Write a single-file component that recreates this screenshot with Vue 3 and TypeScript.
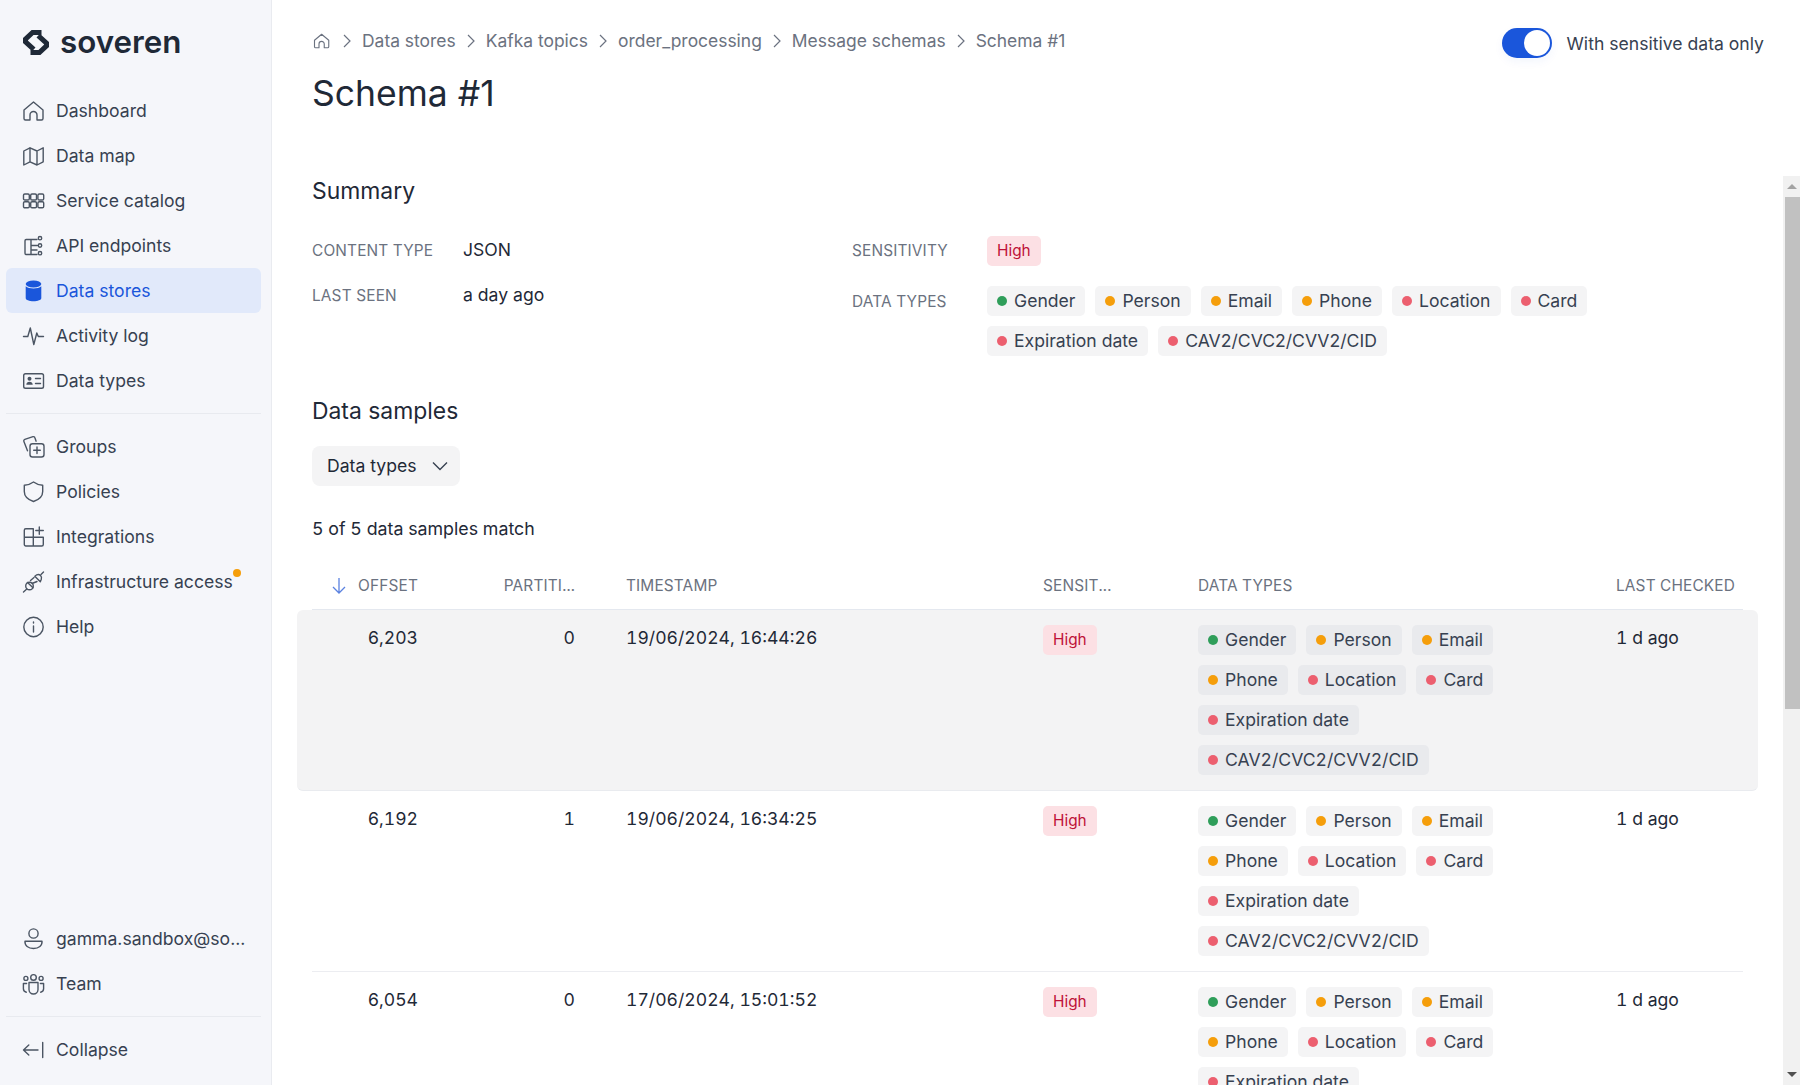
<template>
  <div class="app">
    <aside class="sidebar">
      <div class="brand">
        <svg class="logo" viewBox="0 0 26 25" fill="none" stroke="#1f2937" stroke-width="5" stroke-linejoin="miter">
          <path d="M18.500 2.500H9.600L2.500 9.200v2.600L10.800 19.400" />
          <path d="M7.500 22.500h8.900l7.100-6.700v-2.600L15.200 5.600" />
        </svg>
        <span class="wordmark">soveren</span>
      </div>

      <nav class="nav">
        <a class="nav-item">
          <svg class="icon" viewBox="0 0 24 24"><path d="M2 11 11.500 3 21 11v8.500a1.500 1.500 0 0 1-1.500 1.500H15v-5a3.500 3.500 0 0 0-7 0v5H3.500A1.500 1.500 0 0 1 2 19.500z" /></svg>
          <span>Dashboard</span>
        </a>
        <a class="nav-item">
          <svg class="icon" viewBox="0 0 24 24"><path d="M1.800 7 8 3.800l7 3.200 6.200-3.200v14L15 21l-7-3.200L1.800 21zM8 3.800v14M15 7v14" /></svg>
          <span>Data map</span>
        </a>
        <a class="nav-item">
          <svg class="icon" viewBox="0 0 24 24">
            <rect x="1.500" y="5" width="5.800" height="6" rx="1.300" /><rect x="8.700" y="5" width="5.800" height="6" rx="1.300" /><rect x="15.900" y="5" width="5.800" height="6" rx="1.300" />
            <rect x="1.500" y="12.800" width="5.800" height="6" rx="1.300" /><rect x="8.700" y="12.800" width="5.800" height="6" rx="1.300" /><rect x="15.900" y="12.800" width="5.800" height="6" rx="1.300" />
          </svg>
          <span>Service catalog</span>
        </a>
        <a class="nav-item">
          <svg class="icon" viewBox="0 0 24 24">
            <path d="M15 5.500H4.200A1.200 1.200 0 0 0 3 6.700v12.600a1.200 1.200 0 0 0 1.200 1.200H15M9 5.500v15M9 11.500h6.500M9 16h6" />
            <circle cx="18" cy="4.200" r="1.700" /><circle cx="18" cy="11.500" r="1.700" /><circle cx="18" cy="19.200" r="1.700" />
          </svg>
          <span>API endpoints</span>
        </a>
        <a class="nav-item active">
          <svg class="icon" viewBox="0 0 24 24">
            <ellipse class="solid" cx="11.500" cy="5" rx="7.800" ry="3.500" />
            <path class="solid" d="M3.700 7.300C5.200 9 8.500 9.500 11.500 9.500s6.300-.5 7.800-2.200v12c0 1.600-3.500 3-7.800 3s-7.800-1.400-7.800-3z" />
          </svg>
          <span>Data stores</span>
        </a>
        <a class="nav-item">
          <svg class="icon" viewBox="0 0 24 24"><path d="M1.500 12.500h4.300L8.300 4l3.500 16.500 3-11.500 1.500 3.500h5.200" /></svg>
          <span>Activity log</span>
        </a>
        <a class="nav-item">
          <svg class="icon" viewBox="0 0 24 24">
            <rect x="1.700" y="4.800" width="19.800" height="14.500" rx="1.800" />
            <circle class="solid" cx="7.500" cy="9.800" r="2" /><path class="solid" d="M4.300 15.800c0-2 1.400-3 3.200-3s3.200 1 3.200 3z" />
            <path d="M13.500 9.500h5M13.500 14.500h5" />
          </svg>
          <span>Data types</span>
        </a>
      </nav>
      <div class="divider" />
      <nav class="nav">
        <a class="nav-item">
          <svg class="icon" viewBox="0 0 24 24">
            <rect x="8" y="8.800" width="14" height="13.200" rx="2.500" />
            <path d="M15 12v6.500M11.700 15.300h6.600M5.500 15.800 1.900 6.400a1.500 1.500 0 0 1 .9-2l8.200-2.700a1.500 1.500 0 0 1 1.900 1l1.200 3.500" />
          </svg>
          <span>Groups</span>
        </a>
        <a class="nav-item">
          <svg class="icon" viewBox="0 0 24 24"><path d="M11.500 2c2.500 1.900 5.500 3 9.200 3.200v6.300c0 4.700-3.700 8.200-9.200 10-5.500-1.800-9.200-5.300-9.200-10V5.200C6 5 9 3.900 11.500 2z" /></svg>
          <span>Policies</span>
        </a>
        <a class="nav-item">
          <svg class="icon" viewBox="0 0 24 24"><path d="M11.300 12.200V3.800H3.800a1.500 1.500 0 0 0-1.500 1.500v6.900zM11.300 12.200V21H3.800a1.500 1.500 0 0 1-1.500-1.500v-7.300zM11.300 12.200h10v7.300a1.500 1.500 0 0 1-1.500 1.500h-8.500M17.300 2v7.200M13.800 5.500h7.500" /></svg>
          <span>Integrations</span>
        </a>
        <a class="nav-item">
          <svg class="icon" viewBox="0 0 24 24">
            <path d="M1.500 22 4.800 19M19 4.500 21.500 2M10 13.500l5-2M8.500 10.500 12 7.500" />
            <circle cx="7.500" cy="16" r="3.800" />
            <path d="M5.500 12.500 11 17.800M12.800 6.200l5.500 5.500 1-2.500c.5-1.500.2-2.700-.8-3.700s-2.400-1.300-3.700-.7z" />
          </svg>
          <span class="notify">Infrastructure access<i class="notify-dot" /></span>
        </a>
        <a class="nav-item">
          <svg class="icon" viewBox="0 0 24 24"><circle cx="11.500" cy="12" r="9.700" /><path d="M11.500 11v6M11.500 7v1" /></svg>
          <span>Help</span>
        </a>
      </nav>

      <div class="sidebar-bottom">
        <nav class="nav">
          <a class="nav-item">
            <svg class="icon" viewBox="0 0 24 24"><circle cx="11.500" cy="6.500" r="4.600" /><path d="M3 14.200h17c.5 4.400-3.300 7.300-8.500 7.300S2.500 18.600 3 14.200z" /></svg>
            <span class="ellipsis">gamma.sandbox@so...</span>
          </a>
          <a class="nav-item">
            <svg class="icon" viewBox="0 0 24 24">
              <circle cx="11.500" cy="5.400" r="2.800" /><circle cx="3.900" cy="6.400" r="2" /><circle cx="19.100" cy="6.400" r="2" />
              <path d="M7 10.500h9v7a4.500 4.500 0 0 1-9 0zM4.300 20.200c-2-.5-2.900-1.500-2.900-3.500v-5.200h3.200M18.700 20.200c2-.5 2.900-1.500 2.900-3.500v-5.200h-3.200" />
            </svg>
            <span>Team</span>
          </a>
        </nav>
        <div class="divider" />
        <nav class="nav">
          <a class="nav-item">
            <svg class="icon" viewBox="0 0 24 24"><path d="M6.800 7 1.500 12l5.300 5M1.500 12H16M20.700 4.500v15" /></svg>
            <span>Collapse</span>
          </a>
        </nav>
      </div>
    </aside>

    <main class="main">
      <header class="page-head">
        <div class="head-left">
          <div class="crumbs">
            <svg class="crumb-home" viewBox="0 0 24 24"><path d="M2 11 11.500 3 21 11v8.500a1.500 1.500 0 0 1-1.500 1.500H15v-5a3.500 3.500 0 0 0-7 0v5H3.500A1.500 1.500 0 0 1 2 19.500z" /></svg>
            <template v-for="c in crumbs" :key="c">
              <svg class="crumb-sep" viewBox="0 0 8 14"><path d="M1 1l6 6-6 6" /></svg>
              <span>{{ c }}</span>
            </template>
          </div>
          <h1>Schema #1</h1>
        </div>
        <div class="switch-wrap">
          <span class="switch"><i /></span>
          <span class="switch-label">With sensitive data only</span>
        </div>
      </header>

      <div class="scroll-area">
        <div class="content">
          <h2 class="summary-title">Summary</h2>
          <section class="summary">
            <dl class="facts facts-left">
              <dt>Content type</dt><dd>JSON</dd>
              <dt>Last seen</dt><dd>a day ago</dd>
            </dl>
            <dl class="facts facts-right">
              <dt>Sensitivity</dt>
              <dd><span class="high">High</span></dd>
              <dt>Data types</dt>
              <dd class="chips">
                <span v-for="t in dataTypes" :key="t.name" class="chip"><i :class="t.level" />{{ t.name }}</span>
              </dd>
            </dl>
          </section>

          <h2 class="samples-title">Data samples</h2>
          <button class="filter" type="button">
            Data types
            <svg viewBox="0 0 16 10"><path d="M1 1.500l7 7 7-7" /></svg>
          </button>
          <p class="match">5 of 5 data samples match</p>

          <div class="table">
            <div class="row head">
              <div class="num sort">
                <svg viewBox="0 0 14 16"><path d="M7 0v15M1 9l6 6 6-6" /></svg>
                Offset
              </div>
              <div class="num partition"><span class="clip">Partiti...</span></div>
              <div>Timestamp</div>
              <div>Sensit...</div>
              <div>Data types</div>
              <div>Last checked</div>
            </div>
            <div v-for="(r, i) in rows" :key="r.offset" class="row body" :class="{ hover: i === 0 }">
              <div class="num cell">{{ r.offset }}</div>
              <div class="num partition cell">{{ r.partition }}</div>
              <div class="cell">{{ r.time }}</div>
              <div><span class="high">High</span></div>
              <div class="chips chips-cell">
                <span v-for="t in dataTypes" :key="t.name" class="chip"><i :class="t.level" />{{ t.name }}</span>
              </div>
              <div class="cell">1 d ago</div>
            </div>
          </div>
        </div>

        <div class="scrollbar">
          <span class="arrow up" />
          <span class="thumb" />
          <span class="arrow down" />
        </div>
      </div>
    </main>
  </div>
</template>

<script setup lang="ts">
interface DataType {
  name: string
  level: 'low' | 'mid' | 'top'
}

const crumbs: string[] = ['Data stores', 'Kafka topics', 'order_processing', 'Message schemas', 'Schema #1']

const dataTypes: DataType[] = [
  { name: 'Gender', level: 'low' },
  { name: 'Person', level: 'mid' },
  { name: 'Email', level: 'mid' },
  { name: 'Phone', level: 'mid' },
  { name: 'Location', level: 'top' },
  { name: 'Card', level: 'top' },
  { name: 'Expiration date', level: 'top' },
  { name: 'CAV2/CVC2/CVV2/CID', level: 'top' },
]

const rows = [
  { offset: '6,203', partition: 0, time: '19/06/2024, 16:44:26' },
  { offset: '6,192', partition: 1, time: '19/06/2024, 16:34:25' },
  { offset: '6,054', partition: 0, time: '17/06/2024, 15:01:52' },
]
</script>

<style>
html, body { margin: 0; height: 100%; overflow: hidden; background: #fff; }
</style>

<style scoped>
.app {
  display: flex;
  height: 1085px;
  overflow: hidden;
  font: 400 17.600px/24px Inter, "Noto Sans", sans-serif;
  color: #1f2937;
}

/* sidebar */
.sidebar {
  flex: 0 0 272px;
  box-sizing: border-box;
  height: 100%;
  display: flex;
  flex-direction: column;
  padding: 0 10px 13px 6px;
  background: #f5f6fa;
  border-right: 1px solid #e9ebf0;
}
.brand {
  height: 88px;
  flex: none;
  display: flex;
  align-items: flex-start;
  gap: 11px;
  padding: 30px 0 0 17px;
  box-sizing: border-box;
}
.logo { width: 26px; height: 25px; flex: none; }
.wordmark {
  font-size: 31.300px;
  line-height: 25px;
  font-weight: 600;
  color: #1f2937;
}
.nav { display: flex; flex-direction: column; }
.nav-item {
  height: 45px;
  display: flex;
  align-items: center;
  gap: 10px;
  padding-left: 16px;
  border-radius: 6px;
  color: #374151;
  white-space: nowrap;
}
.icon {
  width: 24px;
  height: 24px;
  flex: none;
  fill: none;
  stroke: #4b5563;
  stroke-width: 1.400;
  stroke-linejoin: round;
  stroke-linecap: round;
}
.icon .solid { fill: #4b5563; stroke: none; }
.active { background: #e1e9fa; color: #1a56db; }
.active .icon .solid { fill: #1a56db; }
.divider { height: 1px; margin: 10px 0; background: #e8eaef; flex: none; }
.sidebar-bottom { margin-top: auto; }
.notify { position: relative; }
.notify-dot {
  position: absolute;
  right: -8px;
  top: -1px;
  width: 8px;
  height: 8px;
  border-radius: 50%;
  background: #f59e0b;
}

/* main */
.main {
  flex: 1;
  min-width: 0;
  display: flex;
  flex-direction: column;
  height: 100%;
}
.page-head {
  flex: 0 0 176px;
  display: flex;
  justify-content: space-between;
  box-sizing: border-box;
  padding: 29px 36px 0 40px;
}
.crumbs {
  display: flex;
  align-items: center;
  gap: 11px;
  height: 24px;
  font-size: 17.450px;
  color: #6b7280;
}
.crumb-home {
  width: 18px;
  height: 18px;
  margin-left: 1px;
  margin-right: 1px;
  fill: none;
  stroke: #6b7280;
  stroke-width: 1.500;
  stroke-linejoin: round;
}
.crumb-sep {
  width: 8px;
  height: 14px;
  fill: none;
  stroke: #6b7280;
  stroke-width: 1.200;
}
h1 {
  margin: 19px 0 0;
  font-size: 35.500px;
  line-height: 44px;
  font-weight: 400;
  color: #1f2937;
}
.switch-wrap {
  display: flex;
  align-items: center;
  gap: 15px;
  height: 30px;
  margin-top: -1px;
  color: #374151;
}
.switch-label { padding-top: 2px; }
.switch {
  position: relative;
  width: 50px;
  height: 30px;
  border-radius: 15px;
  background: #1a56db;
  box-shadow: 0 4px 10px rgba(26, 86, 219, .05);
}
.switch i {
  position: absolute;
  right: 2px;
  top: 2px;
  width: 26px;
  height: 26px;
  border-radius: 50%;
  background: #fff;
}

.scroll-area { flex: 1; min-height: 0; display: flex; }
.content {
  flex: 1;
  min-width: 0;
  overflow: hidden;
  padding: 0 40px;
}
h2 {
  margin: 0;
  font-size: 22.900px;
  line-height: 28px;
  font-weight: 400;
  color: #1f2937;
}
.summary-title { padding-top: 1px; }
.summary {
  display: flex;
  margin-top: 30px;
}
.facts {
  display: grid;
  margin: 0;
  align-items: start;
}
.facts-left {
  flex: 0 0 540px;
  grid-template-columns: 151px 1fr;
  grid-auto-rows: 30px;
  row-gap: 15px;
}
.facts-right {
  flex: 1;
  grid-template-columns: 135px 1fr;
  row-gap: 20px;
}
dt {
  padding-top: 1px;
  font-size: 15.400px;
  line-height: 30px;
  letter-spacing: .15px;
  text-transform: uppercase;
  color: #6b7280;
}
dd { margin: 0; line-height: 30px; }

.high {
  display: inline-block;
  height: 30px;
  padding: 0 10px;
  border-radius: 5px;
  font-size: 15.400px;
  line-height: 30px;
  background: #fce0e4;
  color: #be1238;
}
.chips {
  display: flex;
  flex-wrap: wrap;
  gap: 10px;
}
.chips-cell { max-width: 360px; }
.chip {
  display: inline-flex;
  align-items: center;
  gap: 7px;
  height: 30px;
  padding: 0 10px;
  border-radius: 5px;
  line-height: 30px;
  background: #f4f4f5;
  color: #374151;
  white-space: nowrap;
}
.chip i { width: 10px; height: 10px; border-radius: 50%; flex: none; }
.chip .low { background: #2f9e5a; }
.chip .mid { background: #f59e0b; }
.chip .top { background: #ec5f6f; }

.samples-title { margin-top: 41px; }
.filter {
  display: flex;
  align-items: center;
  gap: 15px;
  height: 40px;
  margin-top: 21px;
  padding: 0 12px 0 15px;
  border: 0;
  border-radius: 8px;
  background: #f4f4f5;
  font: inherit;
  color: #1f2937;
}
.filter svg { width: 16px; height: 10px; fill: none; stroke: #374151; stroke-width: 1.400; }
.match { margin: 31px 0 0; font-size: 17.800px; color: #1f2937; font-variant-numeric: tabular-nums; }

.table { margin-top: 19px; font-variant-numeric: tabular-nums; }
.row {
  display: grid;
  grid-template-columns: 106px 208px 417px 155px 418px 127px;
  width: 1431px;
}
.head {
  height: 50px;
  align-items: center;
  box-sizing: border-box;
  padding-top: 2px;
  border-bottom: 1px solid #e4e8ef;
  font-size: 15.400px;
  letter-spacing: .15px;
  text-transform: uppercase;
  color: #6b7280;
}
.num { text-align: right; }
.partition { padding-right: 51px; }
.clip { display: inline-block; white-space: nowrap; }
.sort { display: flex; align-items: center; justify-content: flex-end; gap: 12px; }
.sort svg { width: 14px; height: 16px; fill: none; stroke: #5b82e0; stroke-width: 1.300; }
.body {
  box-sizing: border-box;
  height: 181px;
  padding-top: 15px;
  border-bottom: 1px solid #ecedf1;
  align-content: start;
}
.cell { padding-top: 1px; }
.hover {
  position: relative;
  width: 1461px;
  margin: 0 -15px;
  padding-left: 15px;
  padding-right: 15px;
  border-radius: 6px;
  background: #f3f3f4;
  border-bottom-color: #e9ebef;
}
.hover .chip { background: #e9eaed; }
.scrollbar {
  flex: 0 0 17px;
  display: flex;
  flex-direction: column;
  background: #f1f1f1;
}
.thumb { width: 15px; height: 512px; margin-left: 2px; background: #c1c1c1; }
.arrow { display: block; height: 21px; position: relative; }
.arrow::after {
  content: '';
  position: absolute;
  left: 4px;
  border-left: 5px solid transparent;
  border-right: 5px solid transparent;
}
.up::after { top: 8px; border-bottom: 5px solid #a3a3a3; }
.down { margin-top: auto; }
.down::after { top: 8px; border-top: 5px solid #505050; }
</style>
